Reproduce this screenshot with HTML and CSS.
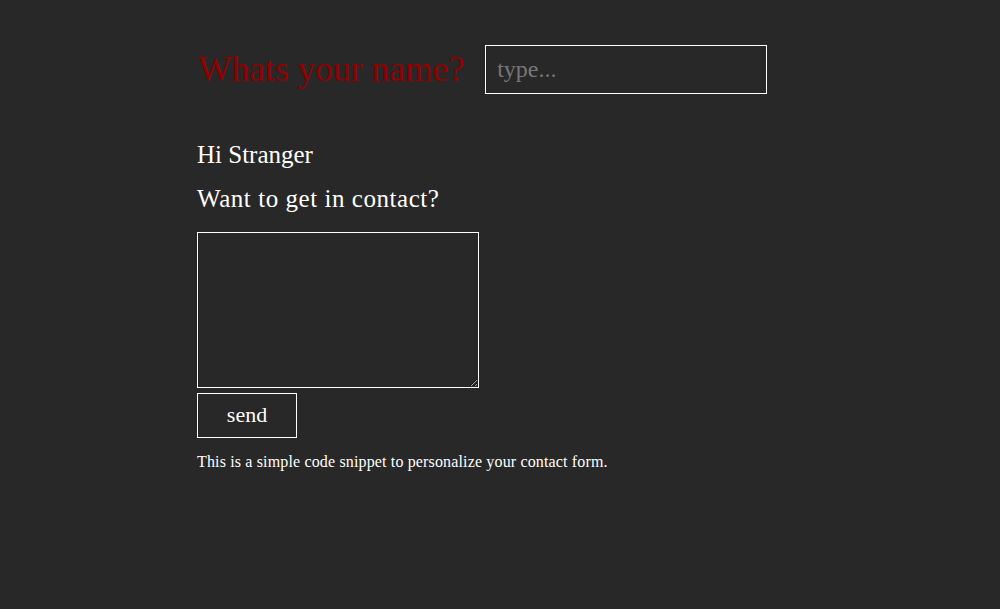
FILE: index.html
```html
<!DOCTYPE html>
<html>
<head>
<meta charset="utf-8">
<link rel="stylesheet" href="styles.css">
</head>
<body>
<main class="wrap">
  <div class="ask">
    <h1 class="ask-title">Whats your name?</h1>
    <input class="name-input" type="text" placeholder="type...">
  </div>
  <h2 class="greet">Hi Stranger</h2>
  <h2 class="question">Want to get in contact?</h2>
  <form class="form">
    <textarea class="message"></textarea>
    <button class="send" type="button">send</button>
  </form>
  <p class="note">This is a simple code snippet to personalize your contact form.</p>
</main>
</body>
</html>
```

FILE: styles.css
```css
html, body {
  margin: 0;
  padding: 0;
  background: #282828;
  height: 100%;
}
body {
  font-family: "Liberation Serif", "DejaVu Serif", serif;
  color: #ffffff;
}
.wrap {
  width: 600px;
  margin: 0 auto;
  padding-top: 45px;
  padding-left: 197px;
  padding-right: 203px;
}
.ask {
  display: flex;
  align-items: center;
  gap: 21px;
}
.ask-title {
  margin: 0 0 2px;
  font-weight: normal;
  font-size: 35.5px;
  color: #8f0000;
  padding-left: 1px;
}
.name-input {
  width: 282px;
  height: 49px;
  box-sizing: border-box;
  background: transparent;
  border: 1px solid #ffffff;
  padding: 0 11px;
  font-family: inherit;
  font-size: 24px;
  color: #ffffff;
  outline: none;
}
.name-input::placeholder {
  color: #777777;
}
.greet {
  margin: 48px 0 0;
  font-weight: normal;
  font-size: 25px;
  line-height: 26px;
}
.question {
  margin: 18px 0 0;
  font-weight: normal;
  font-size: 25px;
  line-height: 26px;
  letter-spacing: 0.55px;
}
.form {
  margin-top: 20px;
  display: flex;
  flex-direction: column;
  align-items: flex-start;
  gap: 5px;
}
.message {
  width: 282px;
  height: 156px;
  box-sizing: border-box;
  background: transparent;
  border: 1px solid #ffffff;
  color: #ffffff;
  margin: 0;
  display: block;
}
.send {
  width: 100px;
  height: 45px;
  box-sizing: border-box;
  background: transparent;
  border: 1px solid #ffffff;
  color: #ffffff;
  font-family: inherit;
  font-size: 22px;
  padding-bottom: 3px;
  cursor: pointer;
}
.note {
  margin: 15px 0 0;
  font-size: 16px;
  letter-spacing: 0.15px;
}
```
